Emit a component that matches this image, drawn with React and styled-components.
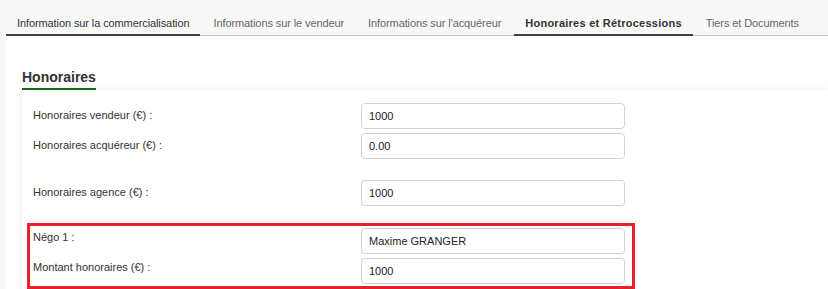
import React from 'react';
import styled, { createGlobalStyle } from 'styled-components';

const GlobalStyle = createGlobalStyle`
  html, body {
    margin: 0;
    padding: 0;
    background: #f8f8f8;
    font-family: "Liberation Sans", Arial, sans-serif;
    overflow: hidden;
  }
`

// tabs
const Page = styled.div`
  padding-left: 6px;
  width: 822px;
  height: 289px;
  overflow: hidden;
`
const TabBar = styled.nav`
  display: flex;
  height: 35px;
  border-bottom: 1px solid #c2c2c2;
`
const Tab = styled.div`
  box-sizing: border-box;
  height: 36px;
  margin-bottom: -1px;
  margin-right: 2px;
  padding: 0 11px 4px;
  display: flex;
  align-items: flex-end;
  font-size: 11px;
  line-height: 13px;
  white-space: nowrap;
  letter-spacing: ${p => (p.$active ? '0.25px' : '-0.1px')};
  color: ${p => (p.$active || p.$marked ? '#333' : '#666')};
  font-weight: ${p => (p.$active ? 'bold' : 'normal')};
  border-bottom: 2px solid ${p => (p.$active || p.$marked ? '#444' : 'transparent')};
`

// content
const Panel = styled.section`
  background: #fff;
  padding: 32px 0 0 16px;
  height: 260px;
`
const Title = styled.h2`
  display: inline-block;
  margin: 0;
  padding-bottom: 3px;
  font-size: 14px;
  line-height: 16px;
  font-weight: bold;
  color: #333;
  border-bottom: 2px solid #0d6b13;
`
const Card = styled.div`
  background: #fff;
  box-shadow: 0 0 6px rgba(0, 0, 0, 0.08);
  padding: 8px 5px 10px;
  display: flex;
  flex-direction: column;
  gap: 11px;
`
const Group = styled.div`
  width: 602px;
  border: 3px solid ${p => (p.$highlight ? '#e8202a' : 'transparent')};
  margin-top: ${p => (p.$highlight ? '1px' : '0')};
  padding: 2px 0;
  display: flex;
  flex-direction: column;
  gap: 4px;
`
const Row = styled.div`
  display: grid;
  grid-template-columns: 328px 264px;
  align-items: start;
  padding-left: 3px;
`
const Label = styled.label`
  font-size: 11px;
  line-height: 14px;
  color: #333;
  padding-top: ${p => (p.$tight ? '2px' : '5px')};
`
const Input = styled.input`
  box-sizing: border-box;
  width: 264px;
  height: 26px;
  padding: 0 7px;
  border: 1px solid #cfd3da;
  border-radius: 4px;
  background: #fff;
  font-family: "Liberation Sans", Arial, sans-serif;
  font-size: 11px;
  color: #222;
  outline: none;
`

const tabs = [
  { label: 'Information sur la commercialisation', marked: true },
  { label: 'Informations sur le vendeur' },
  { label: "Informations sur l'acquéreur" },
  { label: 'Honoraires et Rétrocessions', active: true },
  { label: 'Tiers et Documents' },
]

const groups = [
  {
    rows: [
      ['Honoraires vendeur (€) :', '1000'],
      ['Honoraires acquéreur (€) :', '0.00'],
    ],
  },
  { rows: [['Honoraires agence (€) :', '1000']] },
  {
    highlight: true,
    rows: [
      ['Négo 1 :', 'Maxime GRANGER'],
      ['Montant honoraires (€) :', '1000'],
    ],
  },
]

function App() {
  return (
    <Page>
      <GlobalStyle />
      <TabBar>
        {tabs.map(t => (
          <Tab key={t.label} $active={t.active} $marked={t.marked}>
            {t.label}
          </Tab>
        ))}
      </TabBar>

      <Panel>
        <Title>Honoraires</Title>
        <Card>
          {groups.map((g, i) => (
            <Group key={i} $highlight={g.highlight}>
              {g.rows.map(([label, value]) => (
                <Row key={label}>
                  <Label $tight={g.highlight}>{label}</Label>
                  <Input defaultValue={value} />
                </Row>
              ))}
            </Group>
          ))}
        </Card>
      </Panel>
    </Page>
  );
}

export default App;
